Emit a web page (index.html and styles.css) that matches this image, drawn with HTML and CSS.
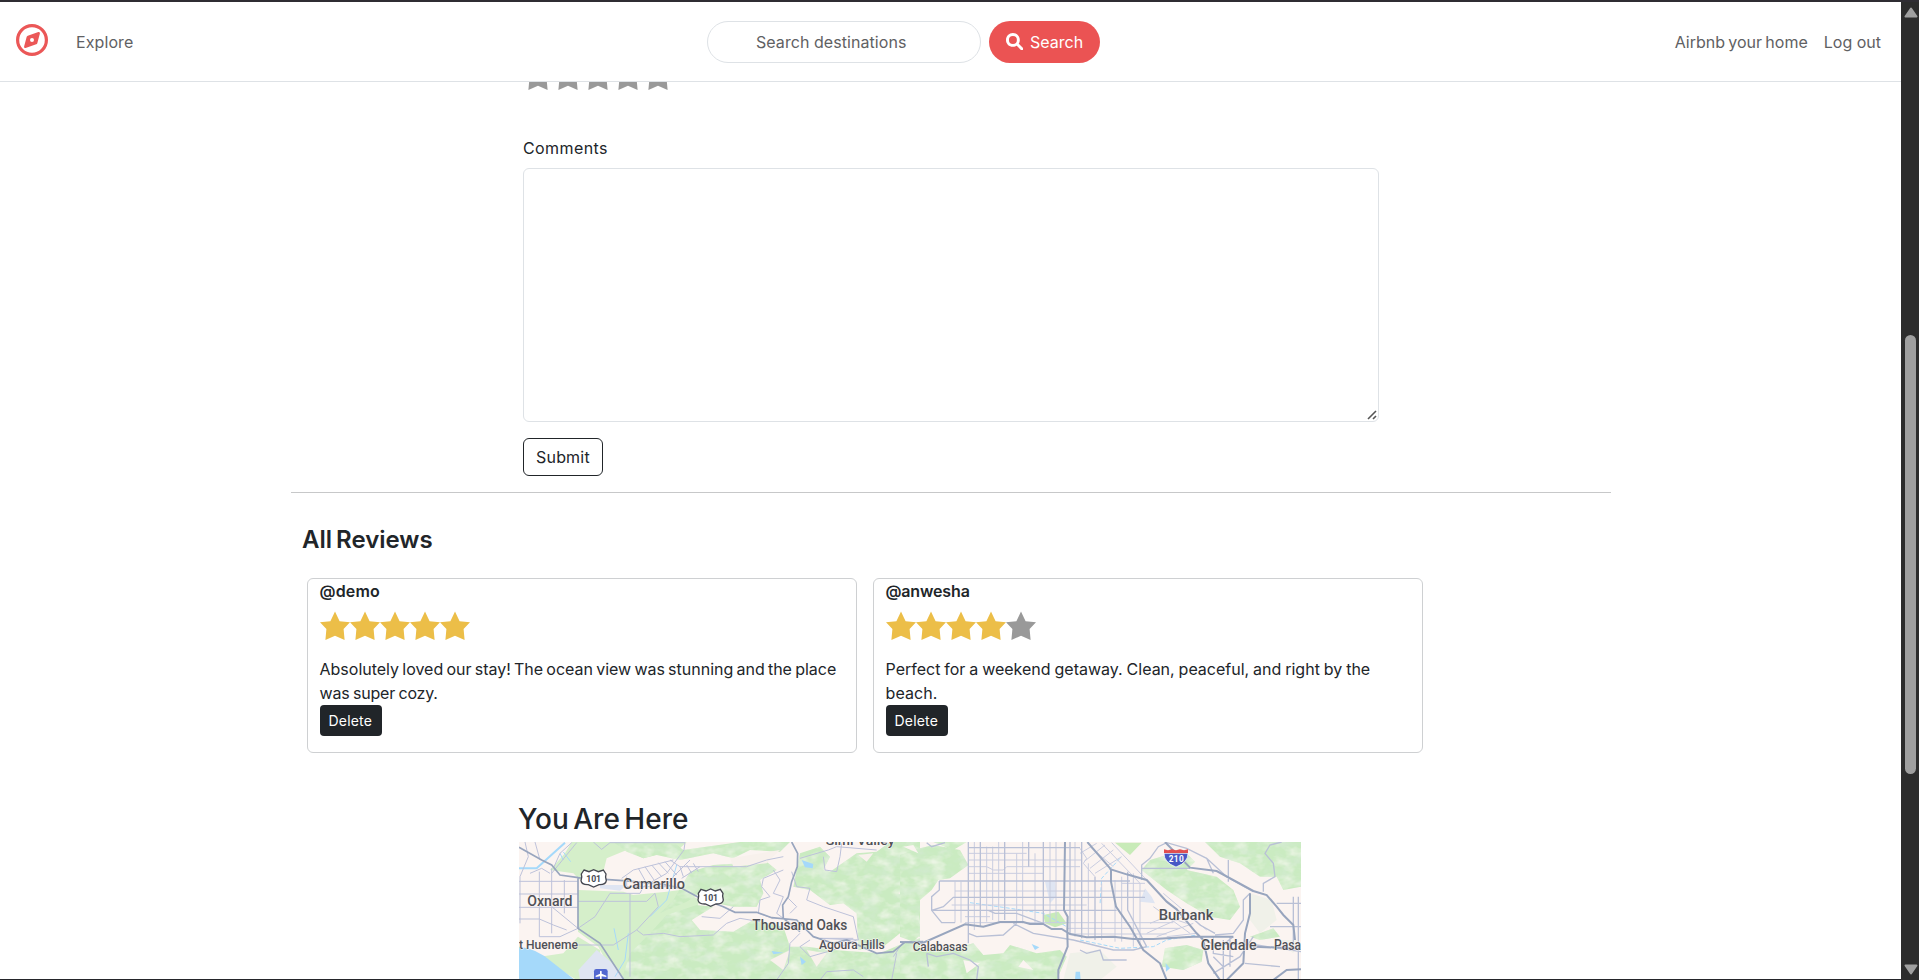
FILE: index.html
```html
<!DOCTYPE html>
<html lang="en">
<head>
<meta charset="utf-8">
<title>Airbnb</title>
<link rel="stylesheet" href="styles.css">
</head>
<body>
<svg width="0" height="0" class="defs"><defs>
<symbol id="star" viewBox="0 0 30 30"><path d="M15 .5 19.600 10.200 30 11.300 23.600 18 24.600 28.900 15 24.800 5.400 28.900 6.400 18 0 11.300 10.400 10.200Z"/></symbol>
</defs></svg>
<div class="page">
<header class="navbar">
  <svg class="logo" viewBox="0 0 32 32"><circle cx="16" cy="16" r="14.400" fill="none" stroke="#eb5757" stroke-width="3.200"/><path fill-rule="evenodd" fill="#eb5757" d="M22.400 8.100 11.800 11.700Q11 12 10.700 12.800L8.100 22.400Q7.800 24.300 9.600 23.900L20.200 20.300Q21 20 21.300 19.200L23.900 9.600Q24.200 7.700 22.400 8.100ZM16 14A2 2 0 1 1 16 18A2 2 0 1 1 16 14Z"/></svg>
  <a class="nav-link explore"><span class="w-explore">Explore</span></a>
  <form class="search">
    <div class="search-input"><span class="w-dest">Search destinations</span></div>
    <div class="search-btn"><svg viewBox="0 0 512 512" width="17" height="17"><path fill="#fff" d="M416 208c0 45.900-14.900 88.300-40 122.700L502.600 457.400c12.500 12.500 12.500 32.800 0 45.300s-32.800 12.500-45.300 0L330.700 376C296.300 401.100 253.900 416 208 416C93.100 416 0 322.900 0 208S93.100 0 208 0S416 93.100 416 208zM208 328a120 120 0 1 0 0-240 120 120 0 1 0 0 240z"/><path d="M355 355 475 475" stroke="#fff" stroke-width="85" stroke-linecap="round"/></svg><span class="w-search">Search</span></div>
  </form>
  <nav class="nav-right"><a class="nav-link"><span class="w-home">Airbnb your home</span></a><a class="nav-link"><span class="w-logout">Log out</span></a></nav>
</header>
<main>
  <section class="review-form">
    <div class="stars clipped"><svg><use href="#star"/></svg><svg><use href="#star"/></svg><svg><use href="#star"/></svg><svg><use href="#star"/></svg><svg><use href="#star"/></svg></div>
    <label class="label"><span class="w-comments">Comments</span></label>
    <div class="textarea"><svg class="grip" viewBox="0 0 10 10"><path d="M1 9 9 1M6 9 9 6" stroke="#555" stroke-width="1.600"/></svg></div>
    <button class="submit"><span class="w-submit">Submit</span></button>
  </section>
  <hr>
  <section class="reviews">
    <h4><span class="w-all">All Reviews</span></h4>
    <div class="cards">
      <article class="card">
        <h5><span class="w-demo">@demo</span></h5>
        <div class="stars gold"><svg><use href="#star"/></svg><svg><use href="#star"/></svg><svg><use href="#star"/></svg><svg><use href="#star"/></svg><svg><use href="#star"/></svg></div>
        <p><span class="w-abs">Absolutely loved our stay! The ocean view was stunning and the place</span><br><span class="w-cozy">was super cozy.</span></p>
        <button class="delete"><span class="w-del">Delete</span></button>
      </article>
      <article class="card">
        <h5><span class="w-anw">@anwesha</span></h5>
        <div class="stars gold"><svg><use href="#star"/></svg><svg><use href="#star"/></svg><svg><use href="#star"/></svg><svg><use href="#star"/></svg><svg class="off"><use href="#star"/></svg></div>
        <p><span class="w-perf">Perfect for a weekend getaway. Clean, peaceful, and right by the</span><br><span class="w-beach">beach.</span></p>
        <button class="delete"><span class="w-del">Delete</span></button>
      </article>
    </div>
  </section>
  <section class="location">
    <h3><span class="w-you">You Are Here</span></h3>
    <svg class="map" viewBox="0 0 782 137" width="782" height="137">
      <defs>
        <filter id="relief" x="0" y="0" width="100%" height="100%"><feTurbulence type="fractalNoise" baseFrequency=".022 .035" numOctaves="3" seed="4" result="n"/><feColorMatrix in="n" type="matrix" values="0 0 0 0 .93  0 0 0 0 .95  0 0 0 0 .88  1.600 0 0 0 -.680" result="pale"/><feComposite in="pale" in2="SourceGraphic" operator="in" result="p"/><feColorMatrix in="n" type="matrix" values="0 0 0 0 .66  0 0 0 0 .82  0 0 0 0 .66  0 1.600 0 0 -.740" result="dark"/><feComposite in="dark" in2="SourceGraphic" operator="in" result="d"/><feMerge><feMergeNode in="SourceGraphic"/><feMergeNode in="p"/><feMergeNode in="d"/></feMerge></filter>
      </defs>
      <rect width="782" height="137" fill="#fbf4f1"/>
      <!-- western half -->
      <g transform="translate(-19 -52) scale(.33333)">
        <path fill="#d5efca" d="M215 156H560L540 175 430 205 380 180 320 205 310 245 240 270 220 250 150 240 195 190ZM234 300 370 305 400 315 500 305 540 300 600 330 560 430 500 470 480 570H350L295 470 234 425ZM120 500 190 490 234 440 300 480 310 570H230Z"/>
        <g filter="url(#relief)"><path fill="#caebc1" d="M340 156H520L550 180 720 156 870 156 840 185 750 180 700 205 640 190 540 210 470 195 430 205 380 185ZM500 375 590 345 640 350 575 390 600 420 700 425 760 390 850 410 870 470 920 470 1000 480 1140 490 1210 460 1260 445V570H365L390 490 450 430Z"/>
        <path fill="#caebc1" d="M570 245 640 225 800 215 830 240 780 270 790 310 770 350 700 350 650 340 600 310 560 335 480 370 520 330ZM900 190 960 170 990 200 970 240 990 245 1070 190 1130 185 1170 156H1260V440L1200 430 1150 470 1075 480 1070 370 1030 340 990 345 930 300 880 290Z"/></g>
        <path fill="#f8f1ec" d="M1075 195 1120 190 1100 215ZM1195 310 1240 285 1230 330ZM690 205 840 180 800 220 700 230ZM810 510 870 480 850 540ZM920 480 980 490 950 530Z"/>
        <path fill="#dfe5f2" d="M300 285H380L360 302 300 295ZM235 540 290 480 350 530 372 570H240Z"/>
        <path fill="#a5d9fa" d="M57 470Q110 475 155 515L225 570H57ZM905 210 940 222 938 235 915 232ZM815 483 850 488 820 493ZM900 500 918 515 905 525Z"/>
        <g fill="none" stroke="#a5d9fa" stroke-width="6"><path d="M57 235H110L195 158"/><path stroke-width="3" d="M180 190 190 210M190 186 212 215M342 415 355 480M385 430 375 510 345 560M530 225 500 330 450 380"/></g>
        <g fill="none" stroke="#bdc2da" stroke-width="3"><path d="M57 274H234M57 312H234M57 352H234M57 387H118L160 405 200 420M118 245V440H180L234 415M155 235V430M193 270V370M155 350 234 415M75 156 85 200 60 260V400M105 156 120 210M90 250 125 235 150 250M160 235 180 190 215 158M155 250 230 158M280 156 305 178 330 158M330 158H555L552 180 500 250 430 290 420 310H330L285 380 234 415M234 334H440L465 310M380 260V290H500L520 260 570 210M365 265 400 240 520 210M415 235 440 280M435 230 462 270M455 225 485 260M475 218 505 250M495 215 530 255M510 210 540 230 600 230 545 265M540 230 550 260M560 225 575 250M580 220 595 245M465 310 475 350 410 420 340 465 234 465M390 310V560M410 420 430 435 490 430 540 440 640 435 680 400 720 385 780 395M600 230 740 230 800 210 850 200M850 240 790 265 785 290 810 320 780 330 775 370 820 385M820 240 840 270 820 310 850 320 830 370 850 385M875 245 890 290 930 295 920 330 970 350 1060 380 1075 450 960 445 1060 445M900 205 985 180 1010 170 1130 180M970 200 975 240 1010 245 1020 200 1025 160M605 380 660 385 700 350M865 325 890 350 870 370M900 430 870 460 865 520 830 570M930 450 900 470 930 500 1000 480 1070 450M960 570 980 545 1060 540 1090 560M1190 490 1175 570M1210 455 1180 500"/></g>
        <g fill="none" stroke="#98a5be" stroke-width="5"><path d="M57 172 125 210 155 225 180 255 235 263 370 272 490 283 545 295 595 322 670 350 705 367 770 367 815 383 890 390 940 440 1000 460 1040 450 1130 490 1180 485 1215 456 1270 455M234 263V415L300 460 372 570M875 156 893 190 892 230 875 275 865 320 848 345 850 385 900 425"/></g>
        <g class="place"><text x="368" y="298" textLength="187" lengthAdjust="spacingAndGlyphs">Camarillo</text><text x="82" y="347" textLength="135" lengthAdjust="spacingAndGlyphs">Oxnard</text><text x="757" y="419" textLength="285" lengthAdjust="spacingAndGlyphs">Thousand Oaks</text><text x="977" y="164" textLength="207" class="small" lengthAdjust="spacingAndGlyphs">Simi Valley</text><text x="57" y="477" textLength="177" class="small" lengthAdjust="spacingAndGlyphs">t Hueneme</text><text x="957" y="477" textLength="197" class="small" lengthAdjust="spacingAndGlyphs">Agoura Hills</text></g>
        <g id="us101"><path fill="#fff" stroke="#454750" stroke-width="4" d="M252 240 267 245 281 239 295 245 310 240 318 252Q315 260 319 272 317 285 297 284L281 291 265 284Q245 285 243 272 247 260 244 252Z"/><text x="259" y="276" textLength="44" font-size="26" class="shield">101</text></g>
        <use href="#us101" x="351" y="58"/>
        <rect x="282" y="537" width="41" height="40" rx="7" fill="#5268d0"/><path fill="#fff" d="M300 544Q303 540 305 544V551L319 557V561L305 559V570H300V559L287 561V557L300 551Z"/>
      </g>
      <!-- eastern half -->
      <g transform="translate(381 -52) scale(.33333)">
        <g filter="url(#relief)"><path fill="#caebc1" d="M0 195 60 175 100 165 180 180 205 225 150 265 115 270 95 300 60 330 55 440 40 455 0 440ZM100 156H200L160 180ZM130 485 220 460 250 495 310 490 330 465 410 490 480 480 500 500 470 570H0V490L90 480ZM750 210 850 180 885 215 860 240 950 260 1000 300 1020 350 990 390 930 380 860 340 800 300 725 240ZM915 156H1203V290L1150 300 1130 260 1080 260 1020 220 960 200ZM795 475 860 465 910 480 905 515 850 540 785 530ZM1050 440 1120 415 1140 440 1080 450Z"/></g>
        <path fill="#c8ebb8" d="M430 375 475 365 500 400 465 412 435 400ZM645 158H725L690 195Z"/>
        <path fill="#fbf4f1" d="M10 170 40 165 55 190ZM355 530 370 510 400 540ZM190 510 240 520 200 550Z"/>
        <path fill="#f0f1e9" d="M1050 310 1115 330 1130 390 1080 430 1050 390ZM1130 450 1190 450 1180 490ZM510 490 600 480 650 530 600 570H490Z"/>
        <path fill="#dfe5f2" d="M435 275 465 275 468 320 450 340ZM735 295 755 320 765 340 720 335Z"/>
        <path fill="#a5d9fa" d="M395 462 418 472 405 480ZM527 545 540 545 542 570H525ZM797 520 810 535 798 545Z"/>
        <path fill="none" stroke="#a5d9fa" stroke-width="3" stroke-dasharray="12 6" d="M210 338 330 355 430 370 500 410M540 450 660 475 760 470 800 450 890 435M660 205 605 265 600 345"/>
        <g fill="none" stroke="#c9cde0" stroke-width="3"><path d="M205 190H380M205 210H545M205 230H260L280 240H310L320 230H540M205 250H430M165 303H735M155 345H560M195 380H270M195 398H820M500 415H840M510 432H800M165 275V398M183 275V398M223 156V420M260 170V395M278 170V390M296 156V395M350 190V395M368 156V400M405 190V400M450 156V400M468 156V400M525 156V440M565 220V440M605 280V450M645 270V455M665 260V455M700 250V470M720 280V460M540 175 560 205 550 220 585 260M540 190 590 160M552 215 615 165M570 235 640 180M585 250 665 200M605 160 720 280M635 158 740 270M570 170 640 230M665 280H735M750 400 800 380 860 400M740 430 850 380M770 440 880 400M800 440 890 430M760 350 870 430M790 310 920 420"/></g>
        <g fill="none" stroke="#b9c0d6" stroke-width="4"><path d="M205 173H540M118 273H690M205 322H735M95 361H650M314 156V390M241 156V410M430 156V400M545 156V445M585 260V450M80 158 95 170 135 158M205 156V460M118 273V300L95 320V361L125 398 165 398M95 361 130 350 160 322H205M205 361H265L285 370H350L430 400M205 430 230 440 310 435 350 400M340 400 400 430 520 450 640 480H700L740 470M386 156V230M510 156V430M683 245V360L740 470M725 270V225L750 205 775 170 800 158 860 175 920 205 980 260 1060 305M725 235 870 235M920 205 940 250M985 210V275M1145 156 1110 165 1095 190 1120 220 1125 260 1090 280V305M1050 310 1030 330V390L1000 430 945 435M850 360 900 405 945 430M910 450 960 470 1000 440M940 440V490L1000 500M970 450V570M990 440V530M940 550 1020 500 1060 440M1180 320V460M1195 320V570M1130 340H1203M1110 410H1203M930 460 1070 465 1203 485M1035 520 1140 530M940 500 970 530M540 480 560 490 600 480 610 510 680 510M80 490 110 500 160 490 210 510 235 530 230 570M80 490 85 530"/></g>
        <g fill="none" stroke="#98a5be" stroke-width="6"><path d="M0 456 70 458 195 403 250 410 300 396H370L390 402H430L455 417H485L510 432 560 442 640 440 700 447 760 447 880 440M495 156 492 360 503 380 502 430 503 470 475 540V570M562 156 633 238 680 253 740 270 800 335 830 358 890 430 910 450 925 520 960 570M633 238V275L648 350 690 410 730 480 780 520 800 570M795 156 870 233 950 243 1060 303 1100 315 1130 350 1150 375 1180 405 1185 450M1050 310 1050 370 1035 430 1030 520 980 570M880 440H1000M1060 470 1185 475M1203 538 1160 540 1120 570"/></g>
        <g class="place"><text x="776" y="390" textLength="164" lengthAdjust="spacingAndGlyphs">Burbank</text><text x="902" y="480" textLength="168" lengthAdjust="spacingAndGlyphs">Glendale</text><text x="1122" y="480" textLength="81" lengthAdjust="spacingAndGlyphs">Pasa</text><text x="38" y="484" textLength="165" class="small" lengthAdjust="spacingAndGlyphs">Calabasas</text></g>
        <path fill="#4858c5" stroke="#fff" stroke-width="2" d="M792 190H864Q864 218 828 231 792 218 792 190Z"/><path fill="#e04f50" d="M792 178 804 181 816 178 828 181 840 178 852 181 864 178V189H792Z"/><text x="806" y="215" textLength="45" font-size="25" class="interstate">210</text>
      </g>
    </svg>
  </section>
</main>
</div>
<aside class="scrollbar"><svg width="14" height="11" viewBox="0 0 14 11"><path d="M7 1.500 12.500 9.500H1.500Z"/></svg><div class="thumb"></div><svg class="down" width="14" height="11" viewBox="0 0 14 11"><path d="M7 9.500 12.500 1.500H1.500Z"/></svg></aside>
</body>
</html>
```
FILE: styles.css
```css
* { box-sizing: border-box; }
body { margin: 0; width: 1919px; height: 980px; overflow: hidden; display: flex; border-top: 2px solid #2f2d33; font: 400 16px/24px Inter, "Open Sans", sans-serif; color: #212529; background: #fff; }
.defs { position: absolute; }
h3, h4, h5, p { margin: 0; }
span { white-space: nowrap; }
button { font: inherit; }
.page { width: 1901px; height: 978px; overflow: hidden; border-bottom: 1px solid #24252a; }
.navbar { height: 80px; display: flex; align-items: center; border-bottom: 1px solid #dee2e6; padding: 0 20px 0 16px; color: #5f6163; }
.logo { width: 32px; height: 32px; margin-bottom: 3px; }
.explore { margin-left: 28px; width: 631px; }
.search { display: flex; gap: 8px; margin: 0; }
.search-input { width: 274px; height: 42px; border: 1px solid #dee2e6; border-radius: 21px; padding: 8px 0 0 48px; }
.search-btn { width: 111px; height: 42px; border-radius: 21px; background: #eb5353; color: #fff; display: flex; align-items: center; padding-left: 17px; gap: 7px; }
.nav-right { margin-left: auto; display: flex; gap: 16px; }
.w-explore { letter-spacing: .1px; }
.w-dest { letter-spacing: .06px; }
.w-home { word-spacing: -1.200px; }
.w-comments { letter-spacing: .4px; }
.w-all { word-spacing: -2px; }
.w-abs { word-spacing: -1.300px; }
.w-cozy { letter-spacing: -.2px; word-spacing: -.8px; }
.w-perf { word-spacing: -.6px; }
.w-beach { letter-spacing: .1px; }
.w-anw { letter-spacing: -.15px; }
.w-demo { letter-spacing: .15px; }
.w-you { word-spacing: -3px; }
.review-form { margin-left: 523px; width: 856px; }
.stars { display: flex; height: 30px; fill: #999; }
.stars svg { width: 30px; height: 30px; flex: none; }
.stars.clipped { height: 9px; overflow: hidden; align-items: flex-end; }
.gold { fill: #ecbe48; }
.stars .off { fill: #999; }
.label { display: block; margin-top: 45px; height: 32px; }
.textarea { height: 254px; border: 1px solid #dee2e6; border-radius: 6px; display: flex; justify-content: flex-end; align-items: flex-end; padding: 1px; }
.grip { width: 10px; height: 10px; }
.submit { display: block; margin-top: 16px; width: 80px; height: 38px; border: 1px solid #212529; border-radius: 6px; background: #fff; color: #212529; padding: 0 0 0 12px; text-align: left; }
.w-submit { letter-spacing: .2px; }
hr { margin: 16px 290px 0 291px; border: 0; border-top: 1px solid #c7c8c9; }
.reviews { margin-left: 302px; }
h4 { margin-top: 32px; font-size: 24px; line-height: 29px; font-weight: 600; }
.cards { display: flex; gap: 16px; margin: 24px 0 0 5px; }
.card { width: 550px; height: 175px; border: 1px solid #ced0d2; border-radius: 6px; padding: 0 12px; }
h5 { font-size: 16px; line-height: 24px; font-weight: 600; margin-left: -.5px; }
.card .stars { margin-top: 8px; }
.card p { margin: 16px 0 0 -.5px; }
.delete { display: block; width: 62px; height: 31px; border: 0; border-radius: 4px; background: #212529; color: #fff; font-size: 14px; padding: 0 0 0 8.500px; text-align: left; }
.w-del { letter-spacing: .2px; }
.location { margin: 49px 0 0 519px; }
h3 { font-size: 28px; line-height: 34px; font-weight: 500; margin: 0 0 6px -1px; }
.map { display: block; }
.place { font-family: Roboto, sans-serif; font-weight: 500; font-size: 43px; fill: #505157; stroke: #fbf7f4; stroke-width: 3px; paint-order: stroke; }
.place .small { font-size: 36px; }
.shield { font-family: Roboto, sans-serif; font-weight: 700; fill: #454750; }
.interstate { font-family: Roboto, sans-serif; font-weight: 700; fill: #fff; }
.scrollbar { width: 18px; height: 978px; background: #2c2c2c; display: flex; flex-direction: column; align-items: center; padding-top: 5px; }
.scrollbar svg { fill: #9f9f9f; stroke: #9f9f9f; stroke-width: 2; stroke-linejoin: round; margin-left: 1px; }
.thumb { width: 11px; height: 439px; border-radius: 6px; background: #9f9f9f; margin: 317px 0 190px 1px; }
```
